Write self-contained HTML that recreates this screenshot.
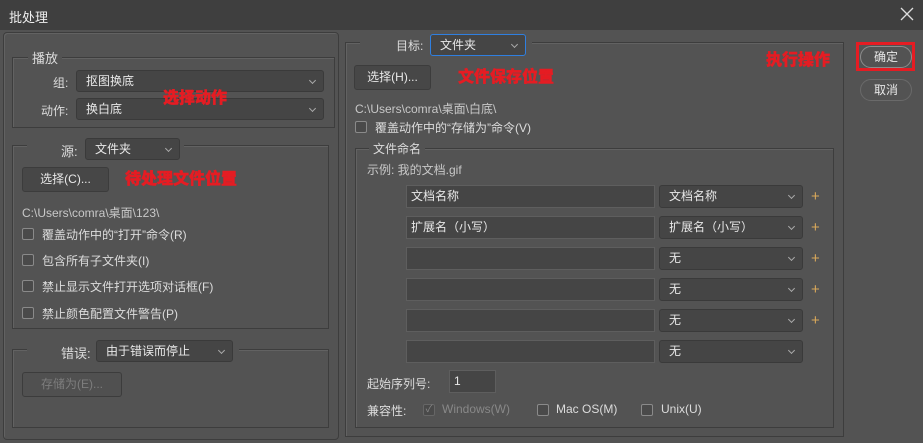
<!DOCTYPE html>
<html><head><meta charset="utf-8"><style>
*{box-sizing:border-box;margin:0;padding:0}
body{width:923px;height:443px;background:#535353;font-family:"Liberation Sans","Noto Sans CJK SC",sans-serif;font-size:12px;color:#dcdcdc;position:relative;overflow:hidden}
.a{position:absolute}
.title{left:0;top:0;width:923px;height:30px;background:#3f3f3f;}
.fr{position:absolute;border:1px solid #3d3d3d;box-shadow:1px 1px 0 #626262 inset}
.sel{position:absolute;background:#454545;border:1px solid #3a3a3a;border-radius:3px;height:22px;line-height:20px;padding-left:9px;color:#e8e8e8}
.sel:after{content:"";position:absolute;right:8px;top:7px;width:4px;height:4px;border-right:1px solid #aaa;border-bottom:1px solid #aaa;transform:rotate(45deg)}
.inp{position:absolute;background:#454545;border:1px solid #5e5e5e;height:23px;line-height:21px;padding-left:4px;color:#e8e8e8}
.btn{position:absolute;background:#474747;border:1px solid #3c3c3c;border-radius:3px;height:25px;line-height:23px;text-align:center;color:#e8e8e8}
.cb{position:absolute;width:12px;height:12px;border:1px solid #8a8a8a;border-radius:2px;background:#4a4a4a}
.red{position:absolute;color:#e51c23;font-weight:900;font-size:16px;font-family:"Noto Sans CJK SC",sans-serif;line-height:20px;-webkit-text-stroke:0.4px #e51c23}
.lg{position:absolute;background:#535353;padding:0 4px}
.plus{position:absolute;color:#d9a85a;font-size:15px;line-height:15px}
.rb{position:absolute;border:1px solid #8c8c8c;border-radius:12px;width:52px;height:22px;line-height:20px;text-align:center;color:#e8e8e8}
</style></head><body>
<div class="a title"></div>
<div class="a" style="left:9px;top:7px;font-size:13px;color:#eee">批处理</div>
<svg class="a" style="left:899px;top:6px" width="16" height="16" viewBox="0 0 16 16"><path d="M2 2L14 14M14 2L2 14" stroke="#ddd" stroke-width="1.3"/></svg>

<div class="fr" style="left:3px;top:32px;width:336px;height:408px;border-radius:4px"></div>

<div class="fr" style="left:12px;top:57px;width:323px;height:71px"></div>
<div class="lg" style="left:28px;top:48px;font-size:13px">播放</div>
<div class="a" style="left:53px;top:74px">组:</div>
<div class="sel" style="left:76px;top:70px;width:248px">抠图换底</div>
<div class="a" style="left:41px;top:102px">动作:</div>
<div class="sel" style="left:76px;top:98px;width:248px">换白底</div>
<div class="red" style="left:163px;top:86px">选择动作</div>

<div class="fr" style="left:12px;top:145px;width:317px;height:184px"></div>
<div class="lg" style="left:27px;top:140px;width:157px;height:14px"></div>
<div class="a" style="left:61px;top:141px;font-size:13px">源:</div>
<div class="sel" style="left:85px;top:138px;width:95px">文件夹</div>
<div class="btn" style="left:22px;top:167px;width:87px">选择(C)...</div>
<div class="red" style="left:125px;top:167px">待处理文件位置</div>
<div class="a" style="left:22px;top:204px;color:#c8c8c8">C:\Users\comra\桌面\123\</div>
<div class="cb" style="left:22px;top:228px"></div><div class="a" style="left:42px;top:226px">覆盖动作中的“打开”命令(R)</div>
<div class="cb" style="left:22px;top:254px"></div><div class="a" style="left:42px;top:252px">包含所有子文件夹(I)</div>
<div class="cb" style="left:22px;top:280px"></div><div class="a" style="left:42px;top:278px">禁止显示文件打开选项对话框(F)</div>
<div class="cb" style="left:22px;top:307px"></div><div class="a" style="left:42px;top:305px">禁止颜色配置文件警告(P)</div>

<div class="fr" style="left:12px;top:349px;width:317px;height:79px"></div>
<div class="lg" style="left:27px;top:340px;width:212px;height:14px"></div>
<div class="a" style="left:61px;top:343px;font-size:13px">错误:</div>
<div class="sel" style="left:96px;top:340px;width:137px">由于错误而停止</div>
<div class="btn" style="left:22px;top:372px;width:100px;color:#7d7d7d;background:#505050">存储为(E)...</div>

<div class="fr" style="left:345px;top:42px;width:499px;height:395px"></div>
<div class="lg" style="left:360px;top:33px;width:172px;height:14px"></div>
<div class="a" style="left:396px;top:37px">目标:</div>
<div class="sel" style="left:430px;top:34px;width:96px;border-color:#2f7fe0">文件夹</div>
<div class="btn" style="left:354px;top:65px;width:77px">选择(H)...</div>
<div class="red" style="left:458px;top:65px">文件保存位置</div>
<div class="a" style="left:355px;top:100px;color:#c8c8c8">C:\Users\comra\桌面\白底\</div>
<div class="cb" style="left:355px;top:121px"></div><div class="a" style="left:375px;top:119px">覆盖动作中的“存储为”命令(V)</div>

<div class="fr" style="left:355px;top:148px;width:479px;height:280px"></div>
<div class="lg" style="left:369px;top:140px">文件命名</div>
<div class="a" style="left:367px;top:161px;color:#c8c8c8">示例: 我的文档.gif</div>

<div class="inp" style="left:406px;top:185px;width:249px">文档名称</div><div class="sel" style="left:659px;top:185px;width:144px;height:23px">文档名称</div><div class="plus" style="left:811px;top:189px">+</div>
<div class="inp" style="left:406px;top:216px;width:249px">扩展名（小写）</div><div class="sel" style="left:659px;top:216px;width:144px;height:23px">扩展名（小写）</div><div class="plus" style="left:811px;top:220px">+</div>
<div class="inp" style="left:406px;top:247px;width:249px"></div><div class="sel" style="left:659px;top:247px;width:144px;height:23px">无</div><div class="plus" style="left:811px;top:251px">+</div>
<div class="inp" style="left:406px;top:278px;width:249px"></div><div class="sel" style="left:659px;top:278px;width:144px;height:23px">无</div><div class="plus" style="left:811px;top:282px">+</div>
<div class="inp" style="left:406px;top:309px;width:249px"></div><div class="sel" style="left:659px;top:309px;width:144px;height:23px">无</div><div class="plus" style="left:811px;top:313px">+</div>
<div class="inp" style="left:406px;top:340px;width:249px"></div><div class="sel" style="left:659px;top:340px;width:144px;height:23px">无</div>

<div class="a" style="left:367px;top:375px">起始序列号:</div>
<div class="inp" style="left:449px;top:370px;width:47px;height:23px">1</div>
<div class="a" style="left:367px;top:402px">兼容性:</div>
<div class="cb" style="left:423px;top:404px;border-color:#666;color:#888;font-size:10px;line-height:10px;text-align:center">✓</div>
<div class="a" style="left:442px;top:402px;color:#888">Windows(W)</div>
<div class="cb" style="left:537px;top:404px"></div><div class="a" style="left:556px;top:402px">Mac OS(M)</div>
<div class="cb" style="left:641px;top:404px"></div><div class="a" style="left:661px;top:402px">Unix(U)</div>

<div class="red" style="left:766px;top:48px">执行操作</div>
<div class="a" style="left:856px;top:42px;width:59px;height:29px;border:3px solid #e51c23"></div>
<div class="rb" style="left:860px;top:46px">确定</div>
<div class="rb" style="left:860px;top:79px;border-color:#6a6a6a">取消</div>
</body></html>
